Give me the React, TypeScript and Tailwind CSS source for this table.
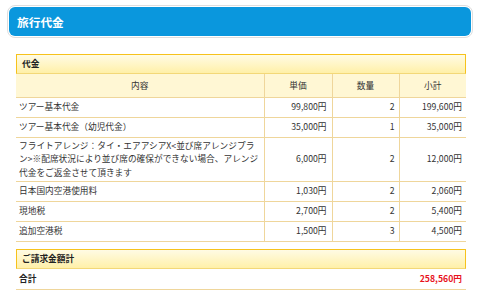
import React from "react";

const rows: { name: React.ReactNode; unit: string; qty: string; sub: string; tall?: boolean }[] = [
  { name: "ツアー基本代金", unit: "99,800円", qty: "2", sub: "199,600円" },
  { name: "ツアー基本代金（幼児代金）", unit: "35,000円", qty: "1", sub: "35,000円" },
  {
    name: (
      <>
        フライトアレンジ：タイ・エアアシアX&lt;並び席アレンジプラ
        <br />
        ン&gt;※配席状況により並び席の確保ができない場合、アレンジ
        <br />
        代金をご返金させて頂きます
      </>
    ),
    unit: "6,000円",
    qty: "2",
    sub: "12,000円",
    tall: true,
  },
  { name: "日本国内空港使用料", unit: "1,030円", qty: "2", sub: "2,060円" },
  { name: "現地税", unit: "2,700円", qty: "2", sub: "5,400円" },
  { name: "追加空港税", unit: "1,500円", qty: "3", sub: "4,500円" },
];

function SectionBox({ title }: { title: string }) {
  return (
    <div className="h-[20px] flex items-center pl-[5px] border border-[#f6c21c] border-b-[#f3d878] bg-gradient-to-b from-[#fffbe4] to-[#fff0a8] font-bold text-[#222]">
      {title}
    </div>
  );
}

export default function App() {
  return (
    <div className="w-[480px] h-[296px] bg-white overflow-hidden text-[8.7px] leading-[13.5px] text-[#333] font-['Noto_Sans_CJK_JP','Noto_Sans',sans-serif]">
      <div className="mt-[5px] mx-[7px] rounded-[8px] border border-[#dedede] p-px bg-white">
        <div className="h-[29px] rounded-[6px] bg-[#0a97dd] flex items-center pl-[8px] text-white font-bold text-[11.7px]">
          旅行代金
        </div>
      </div>

      <div className="mt-[16px] ml-[16px] w-[450px]">
        <SectionBox title="代金" />
        <table className="w-full table-fixed border-collapse">
          <colgroup>
            <col className="w-[248px]" />
            <col className="w-[68px]" />
            <col className="w-[67px]" />
            <col className="w-[67px]" />
          </colgroup>
          <thead>
            <tr className="h-[23px] bg-[#fff7d4]">
              <th className="font-normal text-center border-b border-r border-[#efd69b]">内容</th>
              <th className="font-normal text-center border-b border-r border-[#efd69b]">単価</th>
              <th className="font-normal text-center border-b border-r border-[#efd69b]">数量</th>
              <th className="font-normal text-center border-b border-[#efd69b]">小計</th>
            </tr>
          </thead>
          <tbody>
            {rows.map((r, i) => (
              <tr key={i} className={r.tall ? "h-[44px]" : "h-[20px]"}>
                <td className="pl-[3px] border-b border-r border-[#efd69b] whitespace-nowrap align-middle">{r.name}</td>
                <td className="pr-[5px] text-right border-b border-r border-[#efd69b]">{r.unit}</td>
                <td className="pr-[4px] text-right border-b border-r border-[#efd69b]">{r.qty}</td>
                <td className="pr-[4px] text-right border-b border-[#efd69b]">{r.sub}</td>
              </tr>
            ))}
          </tbody>
        </table>

        <div className="mt-[7px]">
          <SectionBox title="ご請求金額計" />
          <div className="h-[21px] flex items-center justify-between pl-[3px] pr-[4px] border-b border-[#efd69b] font-bold">
            <span className="text-[#222]">合計</span>
            <span className="text-[#e8141e]">258,560円</span>
          </div>
        </div>
      </div>
    </div>
  );
}
